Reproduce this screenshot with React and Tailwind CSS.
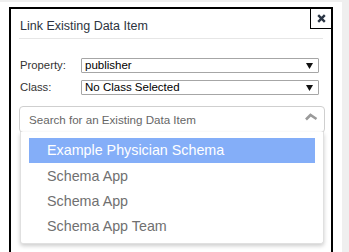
import React from "react";

function SelectBox({ value }) {
  return (
    <div className="w-[238px] h-[15px] border border-[#a6a6a6] rounded-[1px] bg-white flex items-center justify-between pl-[3px] pr-[5px]">
      <span className="text-[11.5px] leading-[13px] text-black">{value}</span>
      <svg width="7" height="6" viewBox="0 0 7 6">
        <polygon points="0,0 7,0 3.5,6" fill="#111" />
      </svg>
    </div>
  );
}

export default function App() {
  const items = ["Schema App", "Schema App", "Schema App Team"];
  return (
    <div
      className="w-[349px] h-[252px] overflow-hidden bg-[#efefef] flex"
      style={{ fontFamily: '"Liberation Sans", Arial, sans-serif' }}
    >
      <div className="w-[342px] h-[250px] mt-[2px] bg-white pl-[9px] pt-[5px]">
        <div className="relative border-2 border-black w-[324px] h-[270px]">
          <div className="absolute top-0 right-0 w-[21px] h-[20px] border-l border-b border-black flex items-center justify-center">
            <svg width="9" height="9" viewBox="0 0 9 9">
              <path d="M1.2 1.2 L7.8 7.8 M7.8 1.2 L1.2 7.8" stroke="#2b3645" strokeWidth="2.4" strokeLinecap="butt" />
            </svg>
          </div>
          <div className="pl-[9px] pt-[9px] text-[12.5px] leading-[16px] text-[#2d3440]">
            Link Existing Data Item
          </div>
          <div className="mx-[8px] mt-[4px] h-px bg-[#e6e6e6]" />
          <div className="mt-[19px] pl-[9px] flex flex-col gap-[7px]">
            <div className="flex items-center">
              <span className="w-[61px] text-[11.3px] leading-[15px] text-[#333]">Property:</span>
              <SelectBox value="publisher" />
            </div>
            <div className="flex items-center">
              <span className="w-[61px] text-[11.3px] leading-[15px] text-[#333]">Class:</span>
              <SelectBox value="No Class Selected" />
            </div>
          </div>
          <div className="relative ml-[8px] mt-[11px] w-[306px] h-[27px] border border-[#cfcfcf] rounded-[4px] flex items-center justify-between pl-[9px] pr-[6px]">
            <span className="text-[11.6px] text-[#666]">Search for an Existing Data Item</span>
            <svg width="13" height="8" viewBox="0 0 13 8" className="mb-[6px]">
              <polyline points="1,6.5 5.5,2 11.5,6" fill="none" stroke="#9a9a9a" strokeWidth="2.6" />
            </svg>
            <div className="absolute top-full left-0 right-0 bg-white rounded-b-[3px] border border-t-0 border-[#e0e0e0] shadow-[0_2px_4px_rgba(0,0,0,0.2)] pt-[6px] pb-[5px] px-[8px]">
              <div className="h-[25px] bg-[#84aef8] text-white text-[14.3px] flex items-center pl-[18px]">
                Example Physician Schema
              </div>
              {items.map((t, i) => (
                <div key={i} className="h-[25px] text-[#707070] text-[14.3px] flex items-center pl-[18px] pt-[2px]">
                  {t}
                </div>
              ))}
            </div>
          </div>
        </div>
      </div>
    </div>
  );
}
